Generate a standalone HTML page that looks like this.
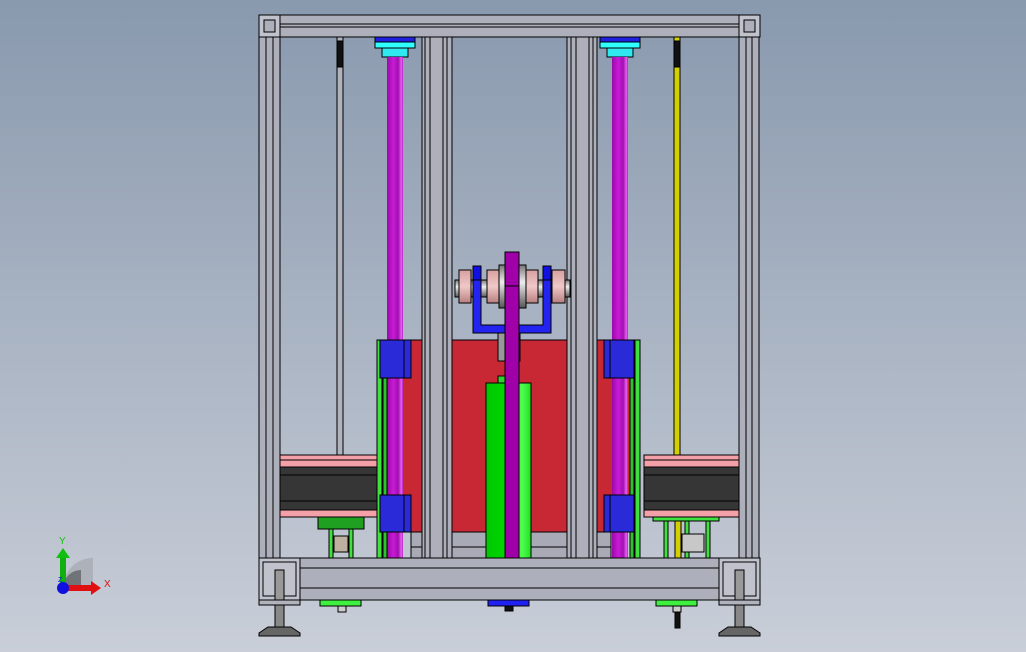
<!DOCTYPE html>
<html><head><style>html,body{margin:0;padding:0;width:1026px;height:652px;overflow:hidden}</style></head><body>
<svg width="1026" height="652" viewBox="0 0 1026 652" xmlns="http://www.w3.org/2000/svg" style="display:block">
<defs>
<linearGradient id="bg" x1="0" y1="0" x2="0" y2="1"><stop offset="0" stop-color="#8999ae"/><stop offset="1" stop-color="#c9ced8"/></linearGradient>
<linearGradient id="mag" x1="0" y1="0" x2="1" y2="0"><stop offset="0" stop-color="#9a0aa8"/><stop offset=".4" stop-color="#c81ad6"/><stop offset=".7" stop-color="#a010b0"/><stop offset=".9" stop-color="#e860f0"/><stop offset="1" stop-color="#b020c0"/></linearGradient>
<linearGradient id="grn" x1="0" y1="0" x2="1" y2="0"><stop offset="0" stop-color="#00c800"/><stop offset=".5" stop-color="#00d800"/><stop offset=".8" stop-color="#50ff50"/><stop offset="1" stop-color="#20e020"/></linearGradient>
<linearGradient id="hub" x1="0" y1="0" x2="0" y2="1"><stop offset="0" stop-color="#777"/><stop offset=".4" stop-color="#eee"/><stop offset="1" stop-color="#555"/></linearGradient>
<linearGradient id="pk" x1="0" y1="0" x2="0" y2="1"><stop offset="0" stop-color="#d8a0a0"/><stop offset=".5" stop-color="#f0c8c8"/><stop offset="1" stop-color="#b88080"/></linearGradient>
</defs>
<rect width="1026" height="652" fill="url(#bg)"/>
<g stroke="#000" stroke-width="1">
<rect x="383" y="340" width="254" height="192" fill="#c82834"/>
<rect x="411" y="532" width="200" height="26" fill="#a8aab6"/>
<line x1="411" y1="547" x2="611" y2="547"/>
<rect x="259" y="37" width="21" height="521" fill="#adafbb"/><line x1="266" y1="37" x2="266" y2="558"/><line x1="273" y1="37" x2="273" y2="558"/>
<rect x="739" y="37" width="20" height="521" fill="#adafbb"/><line x1="746" y1="37" x2="746" y2="558"/><line x1="752" y1="37" x2="752" y2="558"/>
<rect x="422" y="37" width="30" height="521" fill="#adafbb"/><line x1="425" y1="37" x2="425" y2="558"/><line x1="430" y1="37" x2="430" y2="558"/><line x1="443" y1="37" x2="443" y2="558"/><line x1="447" y1="37" x2="447" y2="558"/>
<rect x="567" y="37" width="30" height="521" fill="#adafbb"/><line x1="571" y1="37" x2="571" y2="558"/><line x1="576" y1="37" x2="576" y2="558"/><line x1="589" y1="37" x2="589" y2="558"/><line x1="593" y1="37" x2="593" y2="558"/>
<rect x="259" y="15" width="501" height="22" fill="#adafbb"/><line x1="280" y1="24" x2="739" y2="24"/><line x1="280" y1="27" x2="739" y2="27"/>
<rect x="259" y="15" width="21" height="22" fill="#c0c2cc"/><rect x="739" y="15" width="21" height="22" fill="#c0c2cc"/>
<rect x="264" y="20" width="11" height="12" fill="#adafbb"/><rect x="744" y="20" width="11" height="12" fill="#adafbb"/>
<rect x="337" y="37" width="6" height="418" fill="#b0b2bc"/><rect x="337" y="41" width="6" height="26" fill="#111"/>
<rect x="674" y="37" width="6" height="418" fill="#d4d000"/><rect x="674" y="41" width="6" height="26" fill="#111"/>
<rect x="375" y="37" width="40" height="5" fill="#2020e0"/><rect x="375" y="42" width="40" height="6" fill="#30ffff"/><rect x="382" y="48" width="26" height="9" fill="#30e8f0"/>
<rect x="600" y="37" width="40" height="5" fill="#2020e0"/><rect x="600" y="42" width="40" height="6" fill="#30ffff"/><rect x="607" y="48" width="26" height="9" fill="#30e8f0"/>
<rect x="387" y="57" width="16" height="501" fill="url(#mag)" stroke="none"/>
<rect x="612" y="57" width="16" height="501" fill="url(#mag)" stroke="none"/>
<g>
<rect x="280" y="455" width="97" height="12" fill="#f4a0a8"/><line x1="280" y1="460" x2="377" y2="460"/>
<rect x="280" y="467" width="97" height="43" fill="#363636"/><line x1="280" y1="475" x2="377" y2="475"/><line x1="280" y1="501" x2="377" y2="501"/>
<rect x="280" y="510" width="97" height="7" fill="#f4a0a8"/>
<rect x="644" y="455" width="95" height="12" fill="#f4a0a8"/><line x1="644" y1="460" x2="739" y2="460"/>
<rect x="644" y="467" width="95" height="43" fill="#363636"/><line x1="644" y1="475" x2="739" y2="475"/><line x1="644" y1="501" x2="739" y2="501"/>
<rect x="644" y="510" width="95" height="7" fill="#f4a0a8"/>
</g>
<rect x="377" y="340" width="5" height="218" fill="#40e040"/><rect x="383" y="345" width="4" height="213" fill="#30c030"/>
<rect x="635" y="340" width="5" height="218" fill="#40e040"/><rect x="630" y="345" width="4" height="213" fill="#30c030"/>
<rect x="380" y="340" width="31" height="38" fill="#2a2ad8"/><line x1="404" y1="340" x2="404" y2="378"/>
<rect x="380" y="495" width="31" height="37" fill="#2a2ad8"/><line x1="404" y1="495" x2="404" y2="532"/>
<rect x="604" y="340" width="30" height="38" fill="#2a2ad8"/><line x1="610" y1="340" x2="610" y2="378"/>
<rect x="604" y="495" width="30" height="37" fill="#2a2ad8"/><line x1="610" y1="495" x2="610" y2="532"/>
<rect x="486" y="383" width="45" height="175" fill="url(#grn)"/>
<rect x="498" y="376" width="20" height="7" fill="#30d030"/>
<rect x="498" y="333" width="22" height="28" fill="#999"/>
<rect x="455" y="280" width="115" height="17" fill="url(#hub)"/>
<rect x="459" y="270" width="12" height="33" fill="url(#pk)"/>
<rect x="487" y="270" width="12" height="33" fill="url(#pk)"/>
<rect x="499" y="265" width="27" height="43" fill="url(#hub)"/>
<rect x="526" y="270" width="12" height="33" fill="url(#pk)"/>
<rect x="552" y="270" width="13" height="33" fill="url(#pk)"/>
<path d="M473 266h8v59h62v-59h8v67h-78z" fill="#2424f0"/>
<rect x="473" y="266" width="8" height="14" fill="#1010e0"/><rect x="543" y="266" width="8" height="14" fill="#1010e0"/>
<rect x="505" y="252" width="14" height="306" fill="#a000a8"/><line x1="505" y1="286" x2="519" y2="286"/>
<!-- mechanisms -->
<rect x="318" y="517" width="46" height="12" fill="#20a020"/>
<rect x="329" y="529" width="4" height="29" fill="#40e040"/><rect x="349" y="529" width="4" height="29" fill="#40e040"/>
<rect x="334" y="536" width="14" height="16" fill="#c0b0a0"/>
<rect x="653" y="517" width="66" height="4" fill="#40e040"/>
<rect x="664" y="521" width="4" height="37" fill="#40e040"/><rect x="685" y="521" width="4" height="37" fill="#40e040"/><rect x="706" y="521" width="4" height="37" fill="#40e040"/>
<rect x="675" y="521" width="6" height="37" fill="#d4d000"/>
<rect x="682" y="534" width="22" height="18" fill="#c8c8c8"/>
<rect x="300" y="558" width="419" height="42" fill="#adafbb"/><line x1="300" y1="568" x2="719" y2="568"/><line x1="300" y1="588" x2="719" y2="588"/>
<rect x="259" y="558" width="41" height="42" fill="#c0c2cc"/><rect x="719" y="558" width="41" height="42" fill="#c0c2cc"/>
<rect x="263" y="562" width="33" height="34" fill="none"/><rect x="723" y="562" width="33" height="34" fill="none"/>
<rect x="259" y="600" width="41" height="5" fill="#b0b2bc"/><rect x="719" y="600" width="41" height="5" fill="#b0b2bc"/>
<rect x="275" y="570" width="9" height="30" fill="#999"/><rect x="735" y="570" width="9" height="30" fill="#999"/>
<rect x="275" y="605" width="9" height="22" fill="#888"/><rect x="735" y="605" width="9" height="22" fill="#888"/>
<path d="M268 627h23l9 6v3h-41v-3z" fill="#666"/><path d="M728 627h23l9 6v3h-41v-3z" fill="#666"/>
<rect x="320" y="600" width="41" height="6" fill="#40f040"/><rect x="338" y="606" width="8" height="6" fill="#ccc"/>
<rect x="488" y="600" width="41" height="6" fill="#2020f0"/><rect x="505" y="606" width="8" height="5" fill="#111"/>
<rect x="656" y="600" width="41" height="6" fill="#40f040"/><rect x="673" y="606" width="8" height="6" fill="#ccc"/><rect x="675" y="612" width="5" height="16" fill="#111"/>
</g>
<path d="M63 588 A30 30 0 0 1 93 558 L93 588z" fill="#a8acb4" opacity=".8"/>
<path d="M63 588 A18 18 0 0 1 81 570 L81 588z" fill="#707478"/>
<rect x="60" y="556" width="6" height="30" fill="#10b010"/><path d="M56 558 L63 548 L70 558z" fill="#10c010"/>
<rect x="66" y="585" width="26" height="6" fill="#e01010"/><path d="M91 581 L101 588 L91 595z" fill="#e01010"/>
<circle cx="63" cy="588" r="6" fill="#1010e0"/>
<text x="59" y="544" font-family="Liberation Sans, sans-serif" font-size="10" fill="#10c010">Y</text>
<text x="104" y="587" font-family="Liberation Sans, sans-serif" font-size="10" fill="#e01010">X</text>
<text x="58" y="582" font-family="Liberation Sans, sans-serif" font-size="7" fill="#1010e0">Z</text>
</svg>
</body></html>
